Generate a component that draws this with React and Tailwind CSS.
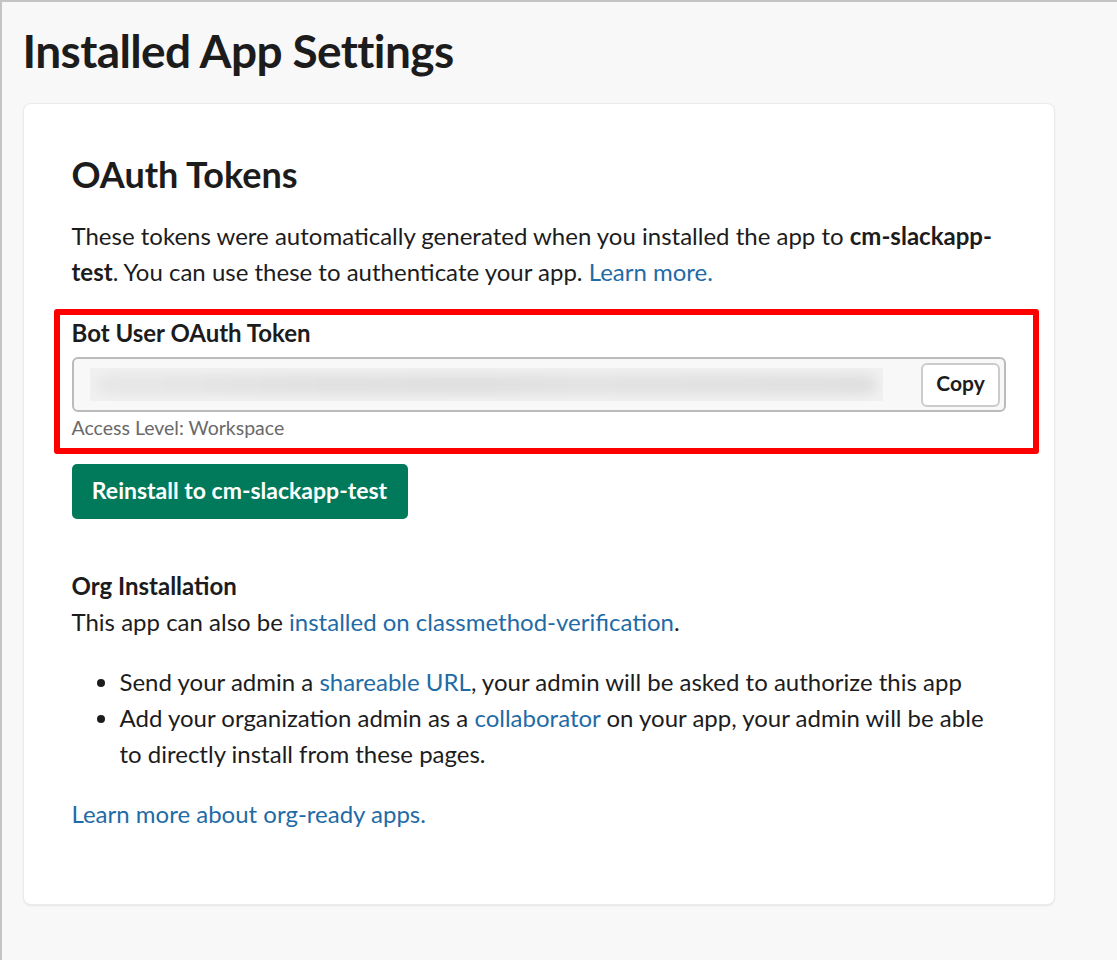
const lato = 'font-["Lato","Open_Sans",sans-serif]';

// Token section, with the red annotation frame lying over it
function TokenField() {
  return (
    <div className="relative mt-[25px]">
      <h3 className="text-[24px] leading-[36px] font-bold text-[#1d1c1d]">Bot User OAuth Token</h3>
      <div className="mt-[6px] h-[55px] flex items-center justify-between rounded-[6px] border-2 border-[#bbbbbb] bg-[#f8f8f8] pl-[16px] pr-[4px]">
        <div className="h-[33px] w-[793px] overflow-hidden bg-[#f1f1f1]">
          <div className="mx-[6px] my-[7px] h-[19px] rounded-full bg-[linear-gradient(90deg,#e6e6e6_0%,#e4e4e4_12%,#dfdfdf_30%,#dedede_50%,#e2e2e2_62%,#e0e0e0_80%,#dedede_100%)] blur-[6px]" />
        </div>
        <button className="h-[44px] w-[79px] rounded-[6px] border-2 border-[#cccccc] bg-white pb-[3px] text-[21px] font-bold text-[#1d1c1d]">Copy</button>
      </div>
      <p className="mt-[1px] text-[19.5px] leading-[30px] text-[#696969]">Access Level: Workspace</p>
      <div className="absolute -left-[18px] -top-[6px] h-[145px] w-[985px] rounded-[3px] border-[6px] border-[#ff0000]" />
    </div>
  );
}

export default function App() {
  const link = 'text-[#1f6ba6]';
  return (
    <div className={`${lato} min-h-[960px] bg-[#f8f8f8] border-t-2 border-l-2 border-[#c4c4c4] pl-[20.5px] pt-[16px] text-[#1d1c1d]`}>
      <h1 className="text-[46px] leading-[66px] font-bold tracking-[-0.6px] text-[#1d1c1d]">Installed App Settings</h1>
      <div className="mt-[19px] h-[802px] w-[1032.5px] rounded-[8px] border border-[#ebebeb] bg-white px-[48px] pt-[46px] shadow-[0_1px_2px_rgba(0,0,0,0.08)]">
        <h2 className="text-[36px] leading-[48px] font-bold">OAuth Tokens</h2>
        <p className="mt-[20px] text-[24px] leading-[36px] text-[#1d1c1d]">
          These tokens were automatically generated when you installed the app to <b>cm-slackapp-test</b>. You can use these to authenticate your app. <a className={link}>Learn more.</a>
        </p>
        <TokenField />
        <button className="mt-[21px] block h-[55px] w-[336px] rounded-[5px] bg-[#007a5a] pb-[2px] text-[23px] font-bold text-white">Reinstall to cm-slackapp-test</button>
        <h3 className="mt-[49px] text-[24px] leading-[36px] font-bold">Org Installation</h3>
        <p className="text-[24px] leading-[36px]">
          This app can also be <a className={link}>installed on classmethod-verification</a>.
        </p>
        <ul className="mt-[24px] list-disc pl-[48px] text-[24px] leading-[36px]">
          <li>Send your admin a <a className={link}>shareable URL</a>, your admin will be asked to authorize this app</li>
          <li>Add your organization admin as a <a className={link}>collaborator</a> on your app, your admin will be able to directly install from these pages.</li>
        </ul>
        <p className="mt-[24px] text-[24px] leading-[36px]">
          <a className={link}>Learn more about org-ready apps.</a>
        </p>
      </div>
    </div>
  );
}
